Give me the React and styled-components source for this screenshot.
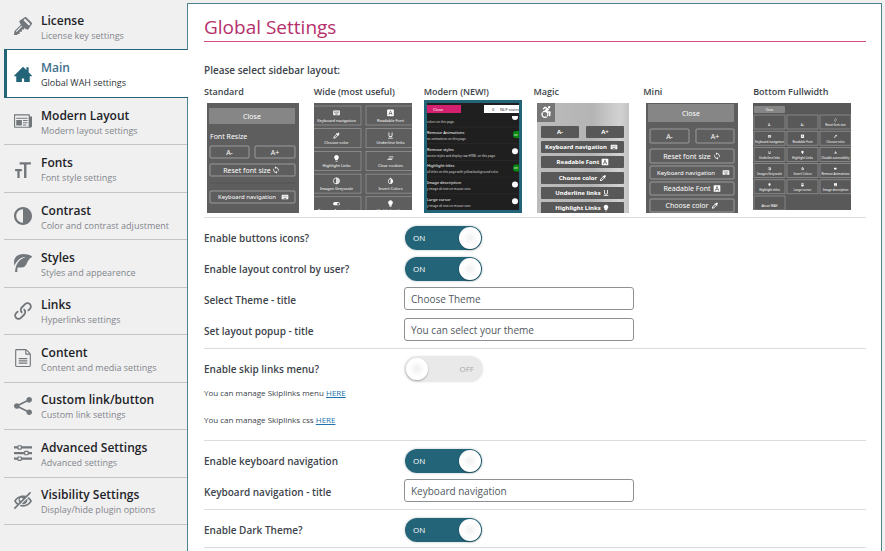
import React, { useState } from 'react';
import styled, { createGlobalStyle } from 'styled-components';
import {
    ImKey2, ImHome3, ImNewspaper, ImFontSize, ImContrast, ImLeaf, ImLink,
    ImFileText2, ImShare2, ImEqualizer, ImEyeBlocked,
} from 'react-icons/im';
import {
    MdKeyboard, MdSync, MdFontDownload, MdColorize, MdFormatUnderlined,
    MdLightbulb, MdClearAll, MdInvertColors, MdTonality, MdToggleOn,
    MdAccessible, MdImage, MdMouse,
} from 'react-icons/md';
import { FaAccessibleIcon } from 'react-icons/fa';


const GlobalStyle = createGlobalStyle`
    * {
        box-sizing: border-box;
    }

    body {
        margin: 0;
        background: #f0f0f1;
        color: #3c434a;
        font-family: "Open Sans", "Noto Sans", sans-serif;
    }
`;

const Page = styled.div`
    display: flex;
    min-height: 100vh;
    padding: 3px 3px 0 4px;
`;

const Sidebar = styled.nav`
    flex: 0 0 184px;
    margin-right: -1px;
    z-index: 1;
`;

const TabList = styled.div`
    display: grid;
    grid-auto-rows: 1fr;
    min-height: 522px;
`;

const Tab = styled.a`
    display: flex;
    align-items: center;
    gap: 9px;
    margin-right: ${props => props.$active ? '0' : '1px'};
    padding-left: ${props => props.$active ? '7px' : '10px'};
    border-bottom: 1px solid ${props => props.$active ? '#236478' : '#c3c4c7'};
    border-left: ${props => props.$active ? '3px solid #236478' : '0'};
    background: ${props => props.$active ? '#fff' : 'transparent'};
    color: ${props => props.$active ? '#236478' : '#72777c'};
    text-decoration: none;

    &:has(+ [aria-current="page"]) {
        border-bottom-color: #236478;
    }
`;

const TabText = styled.span`
    padding-top: 3px;
`;

const TabTitle = styled.span`
    display: block;
    color: ${props => props.$active ? '#3f6f8c' : '#1d2327'};
    font-size: 12px;
    font-weight: 600;
    line-height: 15px;
`;

const TabDetails = styled.span`
    display: block;
    color: ${props => props.$active ? '#2c3338' : '#83868b'};
    font-size: 9px;
    line-height: 15px;
`;

const Panel = styled.main`
    flex: 1;
    min-width: 0;
    padding: 10px 15px 0 16px;
    border: 1px solid #4f8191;
    border-bottom: 0;
    background: #fff;
`;

const PageTitle = styled.h1`
    margin: 0 0 19px;
    padding-bottom: 1px;
    border-bottom: 1px solid #cf4f84;
    color: #b5306b;
    font-size: 19px;
    font-weight: 400;
    line-height: 26px;
`;

const LayoutPicker = styled.fieldset`
    margin: 0;
    padding: 0;
    border: 0;
    border-bottom: 1px solid #dcdcde;
`;

const PickerTitle = styled.legend`
    padding: 0;
    font-size: 10px;
    font-weight: 600;
    line-height: 18px;
`;

const LayoutGrid = styled.div`
    display: grid;
    grid-template-columns: repeat(6, 1fr);
    padding: 4px 3px 4px 0;
`;

const LayoutOption = styled.label`
    display: flex;
    flex-direction: column;
    align-items: flex-start;
    font-size: 9px;
    font-weight: 600;
    line-height: 17px;
    white-space: nowrap;
`;

const HiddenInput = styled.input`
    position: absolute;
    opacity: 0;
    width: 1px;
    height: 1px;
    margin: 0;
`;

const Thumb = styled.span`
    display: flex;
    border: 3px solid ${props => props.$selected ? '#236478' : 'transparent'};
    border-width: ${props => {
        if (props.$selected) return '3px';
        return props.$wide ? '3px 0 0' : '3px 3px 0';
    }};
`;

const Drawing = styled.svg`
    display: block;
    font-family: "Noto Sans", sans-serif;
    font-weight: 400;
`;

const Section = styled.section`
    padding: 4px 0 2px;
    border-bottom: 1px solid #dcdcde;
`;

const Row = styled.div`
    display: grid;
    grid-template-columns: 200px 1fr;
    align-items: center;
    min-height: 31px;
`;

const RowLabel = styled.label`
    font-size: 10px;
    font-weight: 600;
`;

const TextInput = styled.input`
    width: 230px;
    height: 23px;
    margin-bottom: 2px;
    padding: 0 6px;
    border: 1px solid #8c8f94;
    border-radius: 3px;
    background: #fff;
    color: #50575e;
    font-family: inherit;
    font-size: 10px;
`;

const Track = styled.label`
    display: flex;
    flex-direction: ${props => props.$on ? 'row' : 'row-reverse'};
    align-items: center;
    justify-content: space-between;
    width: 77px;
    height: 24px;
    margin-left: 1px;
    padding: 0 1px;
    border-radius: 12px;
    background: ${props => props.$on ? '#236478' : '#e9e9ea'};
    box-shadow: 0 0 2px 1px #dfe3e4;
    color: ${props => props.$on ? '#fff' : '#a7aaad'};
    font-size: 8px;
`;

const TrackText = styled.span`
    padding: 0 7px;
`;

const Knob = styled.span`
    width: 22px;
    height: 22px;
    border-radius: 50%;
    background: radial-gradient(circle, #f0f0f0 0, #fff 50%);
    box-shadow: 0 1px 2px rgba(0, 0, 0, 0.3);
`;

const Note = styled.p`
    margin: 0 0 9px;
    font-size: 8px;
    line-height: 18px;
`;

const NoteLink = styled.a`
    color: #2271b1;
`;


const tabs = [
    { title: 'License', details: 'License key settings', Icon: ImKey2 },
    { title: 'Main', details: 'Global WAH settings', Icon: ImHome3, active: true },
    { title: 'Modern Layout', details: 'Modern layout settings', Icon: ImNewspaper },
    { title: 'Fonts', details: 'Font style settings', Icon: ImFontSize },
    { title: 'Contrast', details: 'Color and contrast adjustment', Icon: ImContrast },
    { title: 'Styles', details: 'Styles and appearence', Icon: ImLeaf },
    { title: 'Links', details: 'Hyperlinks settings', Icon: ImLink },
    { title: 'Content', details: 'Content and media settings', Icon: ImFileText2 },
    { title: 'Custom link/button', details: 'Custom link settings', Icon: ImShare2 },
    { title: 'Advanced Settings', details: 'Advanced settings', Icon: ImEqualizer },
    { title: 'Visibility Settings', details: 'Display/hide plugin options', Icon: ImEyeBlocked },
];

// Button with a caption and an optional icon after it
function Key({ x, y, w, h, label, tx, Icon, ix, size = 7, fill = 'none', stroke = '#b5b5b5', weight = 400 }) {
    const mid = y + h / 2;
    return <g>
        <rect x={ x } y={ y } width={ w } height={ h } rx="1" fill={ fill } stroke={ stroke } strokeWidth="0.7" />
        <text x={ tx || x + w / 2 } y={ mid + size * 0.36 } fontSize={ size } fontWeight={ weight } textAnchor="middle" fill="#fff">{ label }</text>
        { Icon && <Icon x={ ix - 4 } y={ mid - 4 } size={ 8 } color="#fff" /> }
    </g>;
}

// Button with the icon above the caption
function Cell({ x, y, w, h, label, Icon, iconSize, size }) {
    const cx = x + w / 2;
    return <g>
        <rect x={ x } y={ y } width={ w } height={ h } fill="none" stroke="#a2a2a2" strokeWidth="0.6" />
        { Icon && <Icon x={ cx - iconSize / 2 } y={ y + h * 0.36 - iconSize / 2 } size={ iconSize } color="#fff" /> }
        <text x={ cx } y={ y + h * 0.74 + size * 0.36 } fontSize={ size } textAnchor="middle" fill="#fff">{ label }</text>
    </g>;
}

function StandardThumb() {
    return <Drawing width="92" height="110" viewBox="0 0 92 110">
        <rect width="92" height="110" fill="#5e5e5e" />
        <Key x={ 2 } y={ 5 } w={ 86 } h={ 16 } label="Close" fill="#868686" stroke="none" />
        <text x="3" y="36" fontSize="7" fill="#fff">Font Resize</text>
        <Key x={ 3 } y={ 43 } w={ 39 } h={ 12 } label="A-" />
        <Key x={ 48 } y={ 43 } w={ 40 } h={ 12 } label="A+" />
        <Key x={ 3 } y={ 61 } w={ 85 } h={ 12 } label="Reset font size" tx={ 40 } Icon={ MdSync } ix={ 69 } />
        <path d="M3 80H88" stroke="#555" />
        <Key x={ 3 } y={ 88 } w={ 85 } h={ 12 } label="Keyboard navigation" tx={ 40 } size={ 6 } Icon={ MdKeyboard } ix={ 78 } />
    </Drawing>;
}

const wideCells = [
    ['Keyboard navigation', MdKeyboard], ['Readable Font', MdFontDownload],
    ['Choose color', MdColorize], ['Underline links', MdFormatUnderlined],
    ['Highlight Links', MdLightbulb], ['Clear cookies', MdClearAll],
    ['Images Greyscale', MdTonality], ['Invert Colors', MdInvertColors],
    ['Remove Animations', MdToggleOn], ['Highlight titles', MdLightbulb],
];

function WideThumb() {
    return <Drawing width="98" height="107" viewBox="0 0 98 107">
        <rect width="98" height="107" fill="#5e5e5e" />
        { wideCells.map(([label, Icon], i) => (
            <Cell key={ label } x={ i % 2 ? 52 : -2 } y={ 3 + Math.floor(i / 2) * 22.7 } w={ 49 } h={ 19 }
                label={ label } Icon={ Icon } iconSize={ 8 } size={ 4 } />
        )) }
    </Drawing>;
}

const modernRows = [
    ['Remove Animations', 'no animations on this page.', true],
    ['Remove styles', 'access styles and display raw HTML on this page.', false],
    ['Highlight titles', 'all titles on this page with yellow background color.', true],
    ['Image description', 'y image alt text on mouse over.', false],
    ['Large cursor', 'y image alt text on mouse over.', false],
];

function ModernThumb() {
    return <Drawing width="92" height="107" viewBox="0 0 92 107">
        <rect width="92" height="107" fill="#1f1f1f" />
        <circle cx="88" cy="14" r="3" fill="#fff" />
        <rect y="0" width="92" height="13" fill="#1f1f1f" />
        <rect y="2" width="34" height="8" fill="#d3216f" />
        <text x="11" y="8" fontSize="4" textAnchor="middle" fill="#fff">Close</text>
        <rect x="57" y="2" width="35" height="8" fill="#fff" />
        <text x="65" y="8" fontSize="4" fill="#333">0</text>
        <text x="73" y="8" fontSize="4" fill="#333">NLP statem</text>
        <text x="0" y="20" fontSize="3" fill="#ddd">colors on this page.</text>
        { modernRows.map(([title, details, on], i) => {
            const y = 24 + i * 16.7;
            return <g key={ title }>
                <path d={ `M0 ${y}H92` } stroke="#333" strokeWidth="0.5" />
                <text x="0" y={ y + 7 } fontSize="4" fill="#fff">{ title }</text>
                <text x="0" y={ y + 13 } fontSize="3" fill="#ddd">{ details }</text>
                { on && <rect x="86" y={ y + 4 } width="12" height="7" rx="3" fill="#0a8a12" /> }
                { on && <text x="87" y={ y + 9 } fontSize="3" fill="#fff">on</text> }
                { !on && <circle cx="88" cy={ y + 7.5 } r="3" fill="#fff" /> }
            </g>;
        }) }
    </Drawing>;
}

function MagicThumb() {
    const look = { fill: '#585858', stroke: 'none', weight: 700, size: 6 };
    return <Drawing width="92" height="110" viewBox="0 0 92 110">
        <defs>
            <linearGradient id="magicBg">
                <stop offset="0" stopColor="#bcbcbc" />
                <stop offset="0.6" stopColor="#b4b4b4" />
                <stop offset="0.9" stopColor="#d2d2d2" />
                <stop offset="1" stopColor="#c4c4c4" />
            </linearGradient>
        </defs>
        <rect width="92" height="110" fill="url(#magicBg)" />
        <rect width="18" height="19" fill="#767676" />
        <FaAccessibleIcon x={ 3 } y={ 3 } size={ 12 } color="#fff" />
        <Key x={ 4 } y={ 23 } w={ 38 } h={ 12 } label="A-" { ...look } />
        <Key x={ 49 } y={ 23 } w={ 38 } h={ 12 } label="A+" { ...look } />
        <Key x={ 4 } y={ 38 } w={ 83 } h={ 12 } label="Keyboard navigation" tx={ 39 } Icon={ MdKeyboard } ix={ 77 } { ...look } />
        <Key x={ 4 } y={ 53 } w={ 83 } h={ 12 } label="Readable Font" tx={ 41 } Icon={ MdFontDownload } ix={ 68 } { ...look } />
        <Key x={ 4 } y={ 69 } w={ 83 } h={ 12 } label="Choose color" tx={ 41 } Icon={ MdColorize } ix={ 66 } { ...look } />
        <Key x={ 4 } y={ 84 } w={ 83 } h={ 12 } label="Underline links" tx={ 41 } Icon={ MdFormatUnderlined } ix={ 69 } { ...look } />
        <Key x={ 4 } y={ 99 } w={ 83 } h={ 12 } label="Highlight Links" tx={ 41 } Icon={ MdLightbulb } ix={ 69 } { ...look } />
    </Drawing>;
}

function MiniThumb() {
    return <Drawing width="92" height="110" viewBox="0 0 92 110">
        <rect width="92" height="110" fill="#5e5e5e" />
        <Key x={ 2 } y={ 1 } w={ 86 } h={ 18 } label="Close" fill="#868686" stroke="none" />
        <Key x={ 4 } y={ 26 } w={ 39 } h={ 14 } label="A-" />
        <Key x={ 50 } y={ 26 } w={ 38 } h={ 14 } label="A+" />
        <Key x={ 4 } y={ 46 } w={ 84 } h={ 14 } label="Reset font size" tx={ 41 } Icon={ MdSync } ix={ 71 } />
        <Key x={ 4 } y={ 63 } w={ 84 } h={ 13 } label="Keyboard navigation" tx={ 40 } size={ 6 } Icon={ MdKeyboard } ix={ 80 } />
        <Key x={ 4 } y={ 79 } w={ 84 } h={ 13 } label="Readable Font" tx={ 41 } Icon={ MdFontDownload } ix={ 71 } />
        <Key x={ 4 } y={ 96 } w={ 84 } h={ 13 } label="Choose color" tx={ 41 } Icon={ MdColorize } ix={ 69 } />
    </Drawing>;
}

const bottomCells = [
    ['A-'], ['A+'], ['Reset font size', MdSync],
    ['Keyboard navigation', MdKeyboard], ['Readable Font', MdFontDownload], ['Choose color', MdColorize],
    ['Underline links', MdFormatUnderlined], ['Highlight Links', MdLightbulb], ['Disable accessibility', MdAccessible],
    ['Images Greyscale', MdTonality], ['Invert Colors', MdInvertColors], ['Remove Animations', MdToggleOn],
    ['Highlight titles', MdLightbulb], ['Large cursor', MdMouse], ['Image description', MdImage],
    ['About WAH'],
];

function BottomThumb() {
    return <Drawing width="98" height="107" viewBox="0 0 98 107">
        <rect width="98" height="107" fill="#595959" />
        <Key x={ 1 } y={ 3 } w={ 31 } h={ 7 } label="Close" size={ 3 } fill="#868686" stroke="none" />
        { bottomCells.map(([label, Icon], i) => (
            <Cell key={ label } x={ 1 + (i % 3) * 33 } y={ 12 + Math.floor(i / 3) * 16.2 } w={ 31 } h={ 14 }
                label={ label } Icon={ Icon } iconSize={ 4 } size={ 3 } />
        )) }
    </Drawing>;
}

const layouts = [
    { name: 'Standard', Picture: StandardThumb },
    { name: 'Wide (most useful)', Picture: WideThumb, wide: true },
    { name: 'Modern (NEW!)', Picture: ModernThumb },
    { name: 'Magic', Picture: MagicThumb },
    { name: 'Mini', Picture: MiniThumb },
    { name: 'Bottom Fullwidth', Picture: BottomThumb, wide: true },
];

function SwitchRow(props) {
    const { id, label, initial } = props;
    const [on, setOn] = useState(initial);
    return <Row>
        <RowLabel htmlFor={ id }>{ label }</RowLabel>
        <Track $on={ on }>
            <HiddenInput id={ id } type="checkbox" checked={ on } onChange={ e => setOn(e.target.checked) } />
            <TrackText>{ on ? 'ON' : 'OFF' }</TrackText>
            <Knob />
        </Track>
    </Row>;
}

function TextRow(props) {
    const { id, label, value } = props;
    return <Row>
        <RowLabel htmlFor={ id }>{ label }</RowLabel>
        <TextInput id={ id } type="text" defaultValue={ value } />
    </Row>;
}

export default function App() {
    const [layout, setLayout] = useState('Modern (NEW!)');
    return <Page>
        <GlobalStyle />
        <Sidebar>
            <TabList>
                { tabs.map(({ title, details, Icon, active }) => (
                    <Tab key={ title } href="#" $active={ active } aria-current={ active ? 'page' : undefined }>
                        <Icon size={ 18 } />
                        <TabText>
                            <TabTitle $active={ active }>{ title }</TabTitle>
                            <TabDetails $active={ active }>{ details }</TabDetails>
                        </TabText>
                    </Tab>
                )) }
            </TabList>
        </Sidebar>
        <Panel>
            <PageTitle>Global Settings</PageTitle>
            <LayoutPicker>
                <PickerTitle>Please select sidebar layout:</PickerTitle>
                <LayoutGrid>
                    { layouts.map(({ name, Picture, wide }) => (
                        <LayoutOption key={ name }>
                            <HiddenInput type="radio" name="layout" checked={ layout === name } onChange={ () => setLayout(name) } />
                            { name }
                            <Thumb $selected={ layout === name } $wide={ wide }>
                                <Picture />
                            </Thumb>
                        </LayoutOption>
                    )) }
                </LayoutGrid>
            </LayoutPicker>
            <Section>
                <SwitchRow id="icons" label="Enable buttons icons?" initial={ true } />
                <SwitchRow id="control" label="Enable layout control by user?" initial={ true } />
                <TextRow id="theme-title" label="Select Theme - title" value="Choose Theme" />
                <TextRow id="popup-title" label="Set layout popup - title" value="You can select your theme" />
            </Section>
            <Section>
                <SwitchRow id="skiplinks" label="Enable skip links menu?" initial={ false } />
                <Note>You can manage Skiplinks menu <NoteLink href="#">HERE</NoteLink></Note>
                <Note>You can manage Skiplinks css <NoteLink href="#">HERE</NoteLink></Note>
            </Section>
            <Section>
                <SwitchRow id="keyboard" label="Enable keyboard navigation" initial={ true } />
                <TextRow id="keyboard-title" label="Keyboard navigation - title" value="Keyboard navigation" />
            </Section>
            <Section>
                <SwitchRow id="dark" label="Enable Dark Theme?" initial={ true } />
            </Section>
        </Panel>
    </Page>;
}
